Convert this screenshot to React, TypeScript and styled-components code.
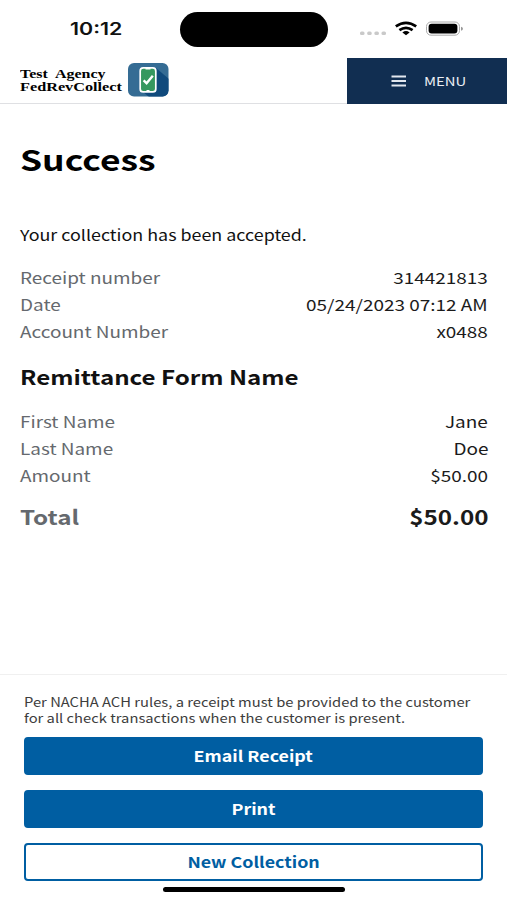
import React from "react";
import styled, { createGlobalStyle } from "styled-components";

const GlobalStyle = createGlobalStyle`
  * { box-sizing: border-box; }
  body { margin: 0; background: #fff; }
`;

const Screen = styled.div`
  width: 507px;
  height: 900px;
  display: flex;
  flex-direction: column;
  overflow: hidden;
  background: #fff;
  color: #1b1b1b;
  font-family: "Noto Sans CJK SC", sans-serif;
  font-size: 15.4px;
`;

const Wide = styled.span<{ $x?: number; $y?: number; $origin?: string }>`
  display: inline-block;
  white-space: nowrap;
  transform: translateY(${(p) => p.$y ?? 0}px) scaleX(${(p) => p.$x ?? 1.23});
  transform-origin: ${(p) => p.$origin ?? "left"} center;
`;

const StatusBar = styled.div`
  height: 58px;
  flex: none;
  display: grid;
  grid-template-columns: 180px 148px 1fr;
  align-items: center;
`;

const Clock = styled.div`
  padding-left: 69.5px;
  font: 600 17px/58px Inter, sans-serif;
  color: #111;
`;

const Island = styled.div`
  height: 35px;
  border-radius: 18px;
  background: #000;
`;

const StatusIcons = styled.svg`
  display: block;
  width: 179px;
  height: 58px;
`;

const Header = styled.header`
  height: 46px;
  flex: none;
  display: flex;
  justify-content: space-between;
  border-bottom: 1px solid #dfe0e3;
`;

const Brand = styled.div`
  display: flex;
  padding: 4px 0 0 20px;
`;

const BrandName = styled.div`
  width: 108px;
  padding-top: 6px;
  font: bold 12.6px/13px "Liberation Serif", serif;
  color: #000;
`;

const BrandLine = styled.div`
  height: 13px;
`;

const Logo = styled.svg`
  display: block;
  width: 41px;
  height: 35px;
`;

const MenuButton = styled.button`
  width: 160px;
  height: 46px;
  border: 0;
  padding: 0 0 0 44px;
  display: flex;
  align-items: center;
  gap: 18px;
  background: #112e51;
  color: #e9edf3;
  font: 400 12.4px/46px "Noto Sans CJK SC", sans-serif;
`;

const MenuIcon = styled.svg`
  width: 15px;
  height: 12px;
  flex: none;
`;

const Content = styled.main`
  flex: 1;
  padding: 37px 19px 0 20px;
`;

const Title = styled.h1`
  margin: 0 0 48px;
  font-size: 28.4px;
  line-height: 36px;
  font-weight: 700;
  color: #000;
`;

const Message = styled.p`
  margin: 0 0 19px;
  font-size: 15px;
  line-height: 20px;
  color: #111;
`;

const Rows = styled.dl`
  margin: 0;
`;

const Row = styled.div<{ $total?: boolean }>`
  display: flex;
  justify-content: space-between;
  line-height: 27px;
  ${(p) => p.$total && "margin-top: 14px; font-size: 20px; font-weight: 700;"}
`;

const Label = styled.dt`
  color: #65696e;
`;

const Value = styled.dd`
  margin: 0;
  color: #1b1b1b;
`;

const SectionTitle = styled.h2`
  margin: 17px 0 16px;
  font-size: 20px;
  line-height: 30px;
  font-weight: 700;
  color: #111;
`;

const Footer = styled.footer`
  height: 226px;
  flex: none;
  display: flex;
  flex-direction: column;
  padding: 19px 24px 0;
  border-top: 1px solid #f0f0f0;
`;

const Notice = styled.p`
  margin: 0 0 11px;
  height: 32px;
  display: flex;
  flex-direction: column;
  align-items: flex-start;
  font-size: 12.5px;
  line-height: 16px;
  color: #3d3d3d;
`;

const Actions = styled.div`
  display: flex;
  flex-direction: column;
  gap: 15px;
`;

const Button = styled.button<{ $outline?: boolean }>`
  height: 38px;
  padding: 0 0 2px;
  border: 2px solid #005ea2;
  border-radius: 4px;
  background: ${(p) => (p.$outline ? "#fff" : "#005ea2")};
  color: ${(p) => (p.$outline ? "#005ea2" : "#fff")};
  font: 700 15px/32px "Noto Sans CJK SC", sans-serif;
`;

const HomeIndicator = styled.div`
  width: 182px;
  height: 5px;
  flex: none;
  margin: 6px 0 0 139px;
  border-radius: 3px;
  background: #000;
`;

const receipt = [
  ["Receipt number", "314421813"],
  ["Date", "05/24/2023 07:12 AM"],
  ["Account Number", "x0488"],
];

const remittance = [
  ["First Name", "Jane"],
  ["Last Name", "Doe"],
  ["Amount", "$50.00"],
];

function Detail({ label, value, total }: { label: string; value: string; total?: boolean }) {
  const x = total ? 1.21 : 1.23;
  return (
    <Row $total={total}>
      <Label><Wide $x={x} $y={0.3}>{label}</Wide></Label>
      <Value><Wide $x={x} $y={0.3} $origin="right">{value}</Wide></Value>
    </Row>
  );
}

function Action({ label, outline }: { label: string; outline?: boolean }) {
  return (
    <Button $outline={outline}>
      <Wide $x={1.19} $y={0.7} $origin="center">{label}</Wide>
    </Button>
  );
}

export default function App() {
  return (
    <Screen>
      <GlobalStyle />
      <StatusBar>
        <Clock><Wide $x={1.26}>10:12</Wide></Clock>
        <Island />
        <StatusIcons viewBox="328 0 179 58">
          <g fill="#c9c9c9">
            <rect x="360" y="31.5" width="4.5" height="3.6" rx="1.5" />
            <rect x="367.2" y="31.5" width="4.5" height="3.6" rx="1.5" />
            <rect x="374.4" y="31.5" width="4.5" height="3.6" rx="1.5" />
            <rect x="381.5" y="31.5" width="4.5" height="3.6" rx="1.5" />
          </g>
          <g fill="none" stroke="#000" strokeWidth="2.7">
            <path d="M395.8 26.4Q406 19.2 416.2 26.4" />
            <path d="M399.4 30.2Q406 25.4 412.6 30.2" />
          </g>
          <path d="M402.4 32.4Q406 29.8 409.6 32.4L406 35.2Z" fill="#000" />
          <rect x="426.5" y="22" width="33" height="13.2" rx="4.5" fill="#fff" stroke="#aaa" />
          <rect x="428.6" y="23.8" width="28.8" height="9.8" rx="3" fill="#000" />
          <path d="M461 26.8q2 .5 2 2t-2 2z" fill="#999" />
        </StatusIcons>
      </StatusBar>
      <Header>
        <Brand>
          <BrandName>
            <BrandLine><Wide $x={1.27}>Test&nbsp; Agency</Wide></BrandLine>
            <BrandLine><Wide $x={1.29}>FedRevCollect</Wide></BrandLine>
          </BrandName>
          <Logo viewBox="0 0 41 35">
            <defs>
              <clipPath id="tile"><rect x="0" y="1" width="40.5" height="33.5" rx="6" /></clipPath>
            </defs>
            <g clipPath="url(#tile)">
              <rect width="41" height="35" fill="#356c94" />
              <path d="M28 6L41 17V35H21L14 29Z" fill="#104a7c" />
            </g>
            <rect x="12.2" y="5.9" width="15.6" height="24" rx="3" fill="#36985f" stroke="#fff" strokeWidth="1.7" />
            <path d="M17.5 6.8h5M18.5 28.8h3" stroke="#fff" strokeWidth="1.4" />
            <path d="M15.6 18.4l3 2.8 6.2-7.4" fill="none" stroke="#fff" strokeWidth="2.4" />
          </Logo>
        </Brand>
        <MenuButton>
          <MenuIcon viewBox="0 0 15 12">
            <path d="M0.5 1.5h14.5M0.5 6h14.5M0.5 10.5h14.5" stroke="#e3e8ef" strokeWidth="2" />
          </MenuIcon>
          <Wide $x={1.2} $y={-0.3}>MENU</Wide>
        </MenuButton>
      </Header>
      <Content>
        <Title><Wide $x={1.248}>Success</Wide></Title>
        <Message><Wide $x={1.192} $y={0.4}>Your collection has been accepted.</Wide></Message>
        <Rows>
          {receipt.map(([l, v]) => <Detail key={l} label={l} value={v} />)}
        </Rows>
        <SectionTitle><Wide $x={1.205}>Remittance Form Name</Wide></SectionTitle>
        <Rows>
          {remittance.map(([l, v]) => <Detail key={l} label={l} value={v} />)}
          <Detail label="Total" value="$50.00" total />
        </Rows>
      </Content>
      <Footer>
        <Notice>
          <Wide $x={1.18}>Per NACHA ACH rules, a receipt must be provided to the customer</Wide>
          <Wide $x={1.18}>for all check transactions when the customer is present.</Wide>
        </Notice>
        <Actions>
          <Action label="Email Receipt" />
          <Action label="Print" />
          <Action label="New Collection" outline />
        </Actions>
        <HomeIndicator />
      </Footer>
    </Screen>
  );
}
